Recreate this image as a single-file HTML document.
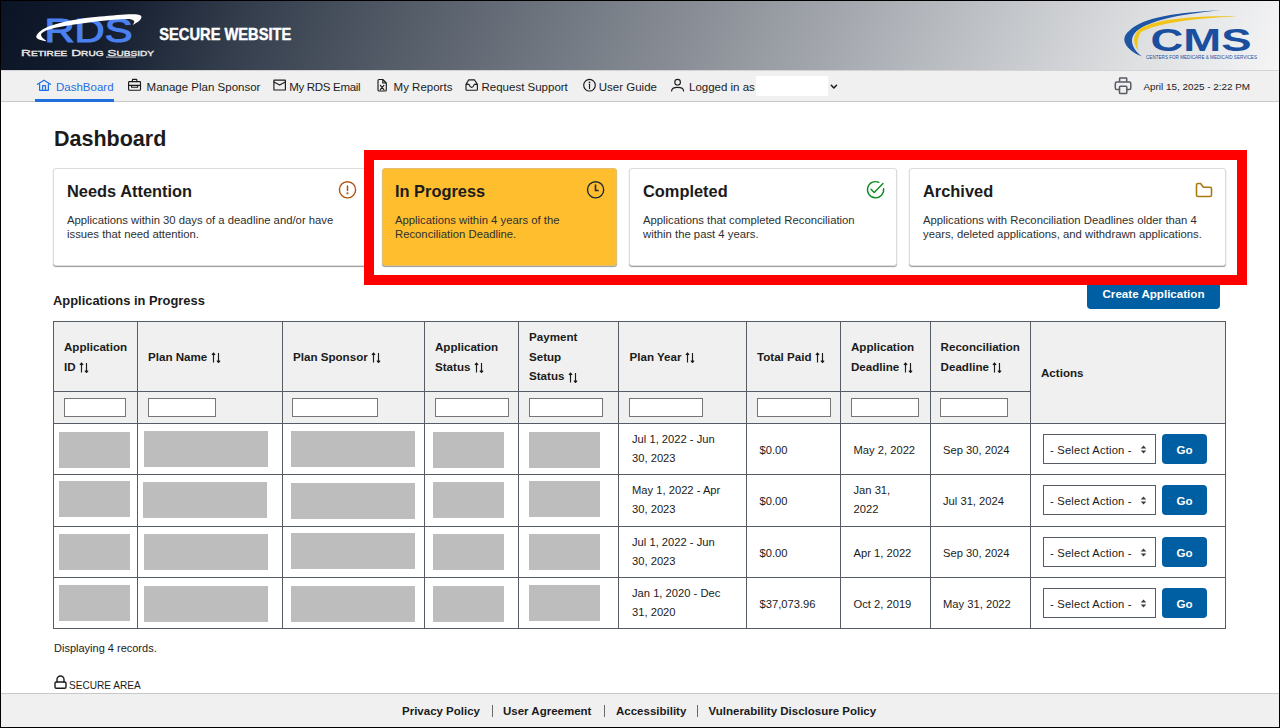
<!DOCTYPE html><html><head><meta charset="utf-8"><style>
*{box-sizing:border-box;margin:0;padding:0}
html,body{width:1280px;height:728px;overflow:hidden;background:#fff}
body{position:relative;font-family:"Liberation Sans",sans-serif;color:#1b1b1b}
.A{position:absolute;white-space:nowrap}
#frame{position:absolute;left:0;top:0;width:1280px;height:728px;border:1px solid #000;z-index:50}
#header{position:absolute;left:0;top:0;width:1280px;height:70px;
 background:linear-gradient(112deg,#0a1425 0%,#141e2f 9%,#343d4c 19%,#555d69 32%,#777d86 46%,#989ca3 60%,#babdc2 74%,#dcdee0 88%,#f5f5f6 100%)}
#nav{position:absolute;left:0;top:70px;width:1280px;height:32px;background:#f0f0f0;border-top:1px solid #d3d3d3;border-bottom:1px solid #c9c9c9}
.nt{font-size:11.5px;line-height:16px;color:#1b1b1b}
.card{position:absolute;top:168px;height:98px;background:#fff;border:1px solid #dcdcdc;border-radius:3px;box-shadow:0 1px 1px #9a9a9a}
.card .t{position:absolute;left:13px;top:12px;font-size:16.4px;font-weight:700;line-height:20px;color:#1b1b1b;white-space:nowrap}
.card .d{position:absolute;left:13px;top:44px;font-size:11.3px;line-height:14px;color:#2e2f30;white-space:nowrap}
.card svg{position:absolute}
#redbox{position:absolute;left:364px;top:150px;width:883px;height:135px;border:10px solid #ff0000;z-index:20}
.hl{position:absolute;background:#565c65}
.th{font-size:11.6px;font-weight:700;line-height:19.5px;color:#1b1b1b}
.td{font-size:11.2px;line-height:19px;color:#1b1b1b}
.gb{position:absolute;background:#bdbdbd}
.inp{position:absolute;top:398px;height:19px;background:#fff;border:1px solid #757575}
.sel{position:absolute;left:1043px;width:113px;height:30px;background:#fff;border:1px solid #565c65}
.go{position:absolute;left:1162px;width:45px;height:30px;background:#005ea2;border-radius:4px;color:#fff;font-size:11.6px;font-weight:700;text-align:center;line-height:31.5px}
.ft{font-size:11.5px;font-weight:700;line-height:16px;color:#1b1b1b}
</style></head><body>
<div id="header"></div>
<svg class="A" style="left:0;top:0" width="170" height="70" viewBox="0 0 170 70">

<text x="44.5" y="42.4" font-family="Liberation Sans" font-size="34" fill="#4a80f0" stroke="#4a80f0" stroke-width="1.1" textLength="88" lengthAdjust="spacingAndGlyphs">RDS</text>
<path d="M46.5,41.3 C41,40.5 35.5,39 36.3,36.3 C37.5,32.5 43,28.5 50,26 C62,22 80,18.3 100,16.6 C118,15 137,12.5 141,15.8 C143,18.5 138,22.5 132.5,25 C136,21.5 134.5,19 127,19 C112,19.3 85,22.5 62,26.5 C51,28.3 43,31 41,34.3 C41,37.5 44,38.8 46.5,41.3 Z" fill="#fff"/>
<text x="21" y="55.7" font-family="Liberation Sans" font-size="9.6" font-weight="400" stroke="#e8e8e8" stroke-width="0.35" fill="#e8e8e8" style="font-variant:small-caps" textLength="133" lengthAdjust="spacingAndGlyphs">Retiree Drug Subsidy</text>
<rect x="106" y="56.6" width="30" height="0.9" fill="#ddd"/>
</svg>
<svg class="A" style="left:150px;top:15px" width="160" height="35" viewBox="150 15 160 35"><text x="159.3" y="40" font-family="Liberation Sans" font-size="16.6" font-weight="700" fill="#fff" stroke="#fff" stroke-width="0.45" textLength="132" lengthAdjust="spacingAndGlyphs">SECURE WEBSITE</text></svg>
<svg class="A" style="left:1110px;top:0" width="170" height="70" viewBox="1110 0 170 70">
<path d="M1142,56.6 C1126,50 1119,39 1129,31 C1140,20 1165,13 1221,10.3 C1175,14.5 1150,21.5 1138,30 C1129,37 1130,47 1142,56.6 Z" fill="#1e55a5"/>
<path d="M1138.6,51 C1134,45 1132,38 1137.5,31 C1146,23 1172,15.5 1237,16.4 C1190,18.2 1155,24 1141,32 C1137.5,37 1136.5,45 1138.6,51 Z" fill="#f0c419"/>
<text x="1150.5" y="50.7" font-family="Liberation Sans" font-size="30.5" font-weight="700" fill="#1a4f9f" textLength="101" lengthAdjust="spacingAndGlyphs">CMS</text>
<text x="1146" y="58.9" font-family="Liberation Sans" font-size="5.6" fill="#1a4f9f" textLength="111" lengthAdjust="spacingAndGlyphs">CENTERS FOR MEDICARE &amp; MEDICAID SERVICES</text>
</svg>
<div id="nav"></div>
<div class="A" style="left:35px;top:99px;width:79px;height:3px;background:#1f6fde"></div>
<div class="A nt" style="left:56px;top:79px;color:#2a6ee0">DashBoard</div>
<div class="A nt" style="left:146.6px;top:79px">Manage Plan Sponsor</div>
<div class="A nt" style="left:289.2px;top:79px;letter-spacing:-0.3px">My RDS Email</div>
<div class="A nt" style="left:393.6px;top:79px">My Reports</div>
<div class="A nt" style="left:481.5px;top:79px">Request Support</div>
<div class="A nt" style="left:598.8px;top:79px">User Guide</div>
<div class="A nt" style="left:689px;top:79px">Logged in as</div>
<div class="A" style="left:756px;top:76px;width:72px;height:20px;background:#fff"></div>
<div class="A nt" style="left:1143.5px;top:79px;font-size:9.9px">April 15, 2025 - 2:22 PM</div>
<div class="A" style="left:54px;top:125.5px;font-size:21.5px;font-weight:700;line-height:26px;color:#1b1b1b">Dashboard</div>
<div class="card" style="left:53px;width:318px;background:#fff;border-color:#dcdcdc"><div class="t">Needs Attention</div><div class="d">Applications within 30 days of a deadline and/or have<br>issues that need attention.</div></div>
<div class="card" style="left:382px;width:235px;background:#ffbe2e;border-color:#e3c070"><div class="t" style="left:12px">In Progress</div><div class="d" style="left:12px">Applications within 4 years of the<br>Reconciliation Deadline.</div></div>
<div class="card" style="left:629px;width:268px;background:#fff;border-color:#dcdcdc"><div class="t">Completed</div><div class="d">Applications that completed Reconciliation<br>within the past 4 years.</div></div>
<div class="card" style="left:909px;width:317px;background:#fff;border-color:#dcdcdc"><div class="t">Archived</div><div class="d">Applications with Reconciliation Deadlines older than 4<br>years, deleted applications, and withdrawn applications.</div></div>
<div id="redbox"></div>
<div class="A" style="left:53px;top:293px;font-size:12.9px;font-weight:700;line-height:16px;color:#1b1b1b">Applications in Progress</div>
<div class="A" style="left:1087px;top:279px;width:133px;height:30px;background:#005ea2;border-radius:4px;color:#fff;font-size:11.6px;font-weight:700;text-align:center;line-height:30px">Create Application</div>
<div class="A" style="left:53px;top:321px;width:1173px;height:102px;background:#f0f0f0"></div>
<div class="hl" style="left:53px;top:321px;width:1px;height:308px"></div>
<div class="hl" style="left:137px;top:321px;width:1px;height:308px"></div>
<div class="hl" style="left:282px;top:321px;width:1px;height:308px"></div>
<div class="hl" style="left:424px;top:321px;width:1px;height:308px"></div>
<div class="hl" style="left:518px;top:321px;width:1px;height:308px"></div>
<div class="hl" style="left:618px;top:321px;width:1px;height:308px"></div>
<div class="hl" style="left:746px;top:321px;width:1px;height:308px"></div>
<div class="hl" style="left:840px;top:321px;width:1px;height:308px"></div>
<div class="hl" style="left:930px;top:321px;width:1px;height:308px"></div>
<div class="hl" style="left:1030px;top:321px;width:1px;height:308px"></div>
<div class="hl" style="left:1225px;top:321px;width:1px;height:308px"></div>
<div class="hl" style="left:53px;top:321px;width:1173px;height:1px"></div>
<div class="hl" style="left:53px;top:391px;width:978px;height:1px"></div>
<div class="hl" style="left:53px;top:423px;width:1173px;height:1px"></div>
<div class="hl" style="left:53px;top:474px;width:1173px;height:1px"></div>
<div class="hl" style="left:53px;top:526px;width:1173px;height:1px"></div>
<div class="hl" style="left:53px;top:577px;width:1173px;height:1px"></div>
<div class="hl" style="left:53px;top:628px;width:1173px;height:1px"></div>
<div class="A th" style="left:64px;top:337.0px">Application<br>ID <svg width="10" height="11" viewBox="0 0 10 11" style="vertical-align:-2.5px" fill="none" stroke="#1b1b1b" stroke-width="1.15"><path d="M2.5,10.6 V1.2 M0.9,2.9 L2.5,1.1 L4.1,2.9 M7.5,1 V10.4 M5.9,8.7 L7.5,10.5 L9.1,8.7"/></svg></div>
<div class="A th" style="left:148px;top:346.75px">Plan Name <svg width="10" height="11" viewBox="0 0 10 11" style="vertical-align:-2.5px" fill="none" stroke="#1b1b1b" stroke-width="1.15"><path d="M2.5,10.6 V1.2 M0.9,2.9 L2.5,1.1 L4.1,2.9 M7.5,1 V10.4 M5.9,8.7 L7.5,10.5 L9.1,8.7"/></svg></div>
<div class="A th" style="left:293px;top:346.75px">Plan Sponsor <svg width="10" height="11" viewBox="0 0 10 11" style="vertical-align:-2.5px" fill="none" stroke="#1b1b1b" stroke-width="1.15"><path d="M2.5,10.6 V1.2 M0.9,2.9 L2.5,1.1 L4.1,2.9 M7.5,1 V10.4 M5.9,8.7 L7.5,10.5 L9.1,8.7"/></svg></div>
<div class="A th" style="left:435px;top:337.0px">Application<br>Status <svg width="10" height="11" viewBox="0 0 10 11" style="vertical-align:-2.5px" fill="none" stroke="#1b1b1b" stroke-width="1.15"><path d="M2.5,10.6 V1.2 M0.9,2.9 L2.5,1.1 L4.1,2.9 M7.5,1 V10.4 M5.9,8.7 L7.5,10.5 L9.1,8.7"/></svg></div>
<div class="A th" style="left:529px;top:327.25px">Payment<br>Setup<br>Status <svg width="10" height="11" viewBox="0 0 10 11" style="vertical-align:-2.5px" fill="none" stroke="#1b1b1b" stroke-width="1.15"><path d="M2.5,10.6 V1.2 M0.9,2.9 L2.5,1.1 L4.1,2.9 M7.5,1 V10.4 M5.9,8.7 L7.5,10.5 L9.1,8.7"/></svg></div>
<div class="A th" style="left:629.5px;top:346.75px">Plan Year <svg width="10" height="11" viewBox="0 0 10 11" style="vertical-align:-2.5px" fill="none" stroke="#1b1b1b" stroke-width="1.15"><path d="M2.5,10.6 V1.2 M0.9,2.9 L2.5,1.1 L4.1,2.9 M7.5,1 V10.4 M5.9,8.7 L7.5,10.5 L9.1,8.7"/></svg></div>
<div class="A th" style="left:757px;top:346.75px">Total Paid <svg width="10" height="11" viewBox="0 0 10 11" style="vertical-align:-2.5px" fill="none" stroke="#1b1b1b" stroke-width="1.15"><path d="M2.5,10.6 V1.2 M0.9,2.9 L2.5,1.1 L4.1,2.9 M7.5,1 V10.4 M5.9,8.7 L7.5,10.5 L9.1,8.7"/></svg></div>
<div class="A th" style="left:851px;top:337.0px">Application<br>Deadline <svg width="10" height="11" viewBox="0 0 10 11" style="vertical-align:-2.5px" fill="none" stroke="#1b1b1b" stroke-width="1.15"><path d="M2.5,10.6 V1.2 M0.9,2.9 L2.5,1.1 L4.1,2.9 M7.5,1 V10.4 M5.9,8.7 L7.5,10.5 L9.1,8.7"/></svg></div>
<div class="A th" style="left:940.6px;top:337.0px">Reconciliation<br>Deadline <svg width="10" height="11" viewBox="0 0 10 11" style="vertical-align:-2.5px" fill="none" stroke="#1b1b1b" stroke-width="1.15"><path d="M2.5,10.6 V1.2 M0.9,2.9 L2.5,1.1 L4.1,2.9 M7.5,1 V10.4 M5.9,8.7 L7.5,10.5 L9.1,8.7"/></svg></div>
<div class="A th" style="left:1041px;top:362.5px">Actions</div>
<div class="inp" style="left:64px;width:62px"></div>
<div class="inp" style="left:148px;width:68px"></div>
<div class="inp" style="left:292px;width:86px"></div>
<div class="inp" style="left:435px;width:74px"></div>
<div class="inp" style="left:529px;width:74px"></div>
<div class="inp" style="left:629px;width:74px"></div>
<div class="inp" style="left:757px;width:74px"></div>
<div class="inp" style="left:851px;width:68px"></div>
<div class="inp" style="left:940px;width:68px"></div>
<div class="gb" style="left:59px;top:432px;width:71px;height:36px"></div>
<div class="gb" style="left:144px;top:431px;width:124px;height:36px"></div>
<div class="gb" style="left:291px;top:431px;width:124px;height:36px"></div>
<div class="gb" style="left:433px;top:432px;width:71px;height:36px"></div>
<div class="gb" style="left:529px;top:432px;width:71px;height:36px"></div>
<div class="A td" style="left:632px;top:430.0px">Jul 1, 2022 - Jun<br>30, 2023</div>
<div class="A td" style="left:759.5px;top:440.5px">$0.00</div>
<div class="A td" style="left:853.5px;top:440.5px">May 2, 2022</div>
<div class="A td" style="left:943px;top:440.5px">Sep 30, 2024</div>
<div class="sel" style="top:434px"><div class="A td" style="left:6px;top:5.5px;letter-spacing:0.2px">- Select Action -</div><svg class="A" style="left:96px;top:9.5px" width="7" height="9" viewBox="0 0 7 9"><path d="M3.5,0.5 L6.3,3.6 H0.7 Z M3.5,8.5 L6.3,5.4 H0.7 Z" fill="#3d3d3d"/></svg></div>
<div class="go" style="top:434px">Go</div>
<div class="gb" style="left:59px;top:481px;width:71px;height:36px"></div>
<div class="gb" style="left:143px;top:482px;width:124px;height:36px"></div>
<div class="gb" style="left:291px;top:483px;width:124px;height:36px"></div>
<div class="gb" style="left:433px;top:482px;width:71px;height:36px"></div>
<div class="gb" style="left:529px;top:481px;width:71px;height:36px"></div>
<div class="A td" style="left:632px;top:481.0px">May 1, 2022 - Apr<br>30, 2023</div>
<div class="A td" style="left:759.5px;top:491.5px">$0.00</div>
<div class="A td" style="left:853.5px;top:481.0px">Jan 31,<br>2022</div>
<div class="A td" style="left:943px;top:491.5px">Jul 31, 2024</div>
<div class="sel" style="top:485px"><div class="A td" style="left:6px;top:5.5px;letter-spacing:0.2px">- Select Action -</div><svg class="A" style="left:96px;top:9.5px" width="7" height="9" viewBox="0 0 7 9"><path d="M3.5,0.5 L6.3,3.6 H0.7 Z M3.5,8.5 L6.3,5.4 H0.7 Z" fill="#3d3d3d"/></svg></div>
<div class="go" style="top:485px">Go</div>
<div class="gb" style="left:59px;top:534px;width:71px;height:36px"></div>
<div class="gb" style="left:144px;top:534px;width:124px;height:36px"></div>
<div class="gb" style="left:291px;top:533px;width:124px;height:36px"></div>
<div class="gb" style="left:433px;top:534px;width:71px;height:36px"></div>
<div class="gb" style="left:529px;top:534px;width:71px;height:36px"></div>
<div class="A td" style="left:632px;top:533.0px">Jul 1, 2022 - Jun<br>30, 2023</div>
<div class="A td" style="left:759.5px;top:543.5px">$0.00</div>
<div class="A td" style="left:853.5px;top:543.5px">Apr 1, 2022</div>
<div class="A td" style="left:943px;top:543.5px">Sep 30, 2024</div>
<div class="sel" style="top:537px"><div class="A td" style="left:6px;top:5.5px;letter-spacing:0.2px">- Select Action -</div><svg class="A" style="left:96px;top:9.5px" width="7" height="9" viewBox="0 0 7 9"><path d="M3.5,0.5 L6.3,3.6 H0.7 Z M3.5,8.5 L6.3,5.4 H0.7 Z" fill="#3d3d3d"/></svg></div>
<div class="go" style="top:537px">Go</div>
<div class="gb" style="left:59px;top:585px;width:71px;height:36px"></div>
<div class="gb" style="left:144px;top:586px;width:124px;height:36px"></div>
<div class="gb" style="left:291px;top:586px;width:124px;height:36px"></div>
<div class="gb" style="left:433px;top:586px;width:71px;height:36px"></div>
<div class="gb" style="left:529px;top:585px;width:71px;height:36px"></div>
<div class="A td" style="left:632px;top:584.0px">Jan 1, 2020 - Dec<br>31, 2020</div>
<div class="A td" style="left:759.5px;top:594.5px">$37,073.96</div>
<div class="A td" style="left:853.5px;top:594.5px">Oct 2, 2019</div>
<div class="A td" style="left:943px;top:594.5px">May 31, 2022</div>
<div class="sel" style="top:588px"><div class="A td" style="left:6px;top:5.5px;letter-spacing:0.2px">- Select Action -</div><svg class="A" style="left:96px;top:9.5px" width="7" height="9" viewBox="0 0 7 9"><path d="M3.5,0.5 L6.3,3.6 H0.7 Z M3.5,8.5 L6.3,5.4 H0.7 Z" fill="#3d3d3d"/></svg></div>
<div class="go" style="top:588px">Go</div>
<div class="A" style="left:54px;top:640px;font-size:11px;line-height:16px;color:#1b1b1b">Displaying 4 records.</div>
<div class="A" style="left:69px;top:677.5px;font-size:10.1px;line-height:16px;color:#1b1b1b">SECURE AREA</div>
<div class="A" style="left:0;top:693px;width:1280px;height:35px;background:#f0f0f0;border-top:1px solid #c8c8c8"></div>
<div class="A ft" style="left:402px;top:703px">Privacy Policy</div>
<div class="A ft" style="left:503px;top:703px">User Agreement</div>
<div class="A ft" style="left:616px;top:703px">Accessibility</div>
<div class="A ft" style="left:708.5px;top:703px">Vulnerability Disclosure Policy</div>
<div class="A" style="left:491.5px;top:705px;width:1px;height:12px;background:#6a6a6a"></div>
<div class="A" style="left:604px;top:705px;width:1px;height:12px;background:#6a6a6a"></div>
<div class="A" style="left:697px;top:705px;width:1px;height:12px;background:#6a6a6a"></div>
<svg class="A" style="left:0;top:0;z-index:10" width="1280" height="728" viewBox="0 0 1280 728" fill="none" stroke-linecap="round" stroke-linejoin="round">
<g stroke="#1f6fe5" stroke-width="1.25"><path d="M37.5,84.3 L44,80.2 L50.5,84.3 M39.6,83 V90.3 H48.4 V83 M42.6,90.3 V85.6 H45.5 V90.3"/></g>
<g stroke="#1b1b1b" stroke-width="1.15">
<rect x="128.6" y="81.6" width="11.9" height="8.7" rx="0.8"/><path d="M132.4,81.6 V79.8 Q132.4,79.3 133,79.3 H136.3 Q136.8,79.3 136.8,79.8 V81.6 M128.6,85.3 H140.5 M131.6,85.3 V87.2 H137.6 V85.3"/>
<rect x="273.9" y="80.1" width="11.5" height="9.9" rx="0.3"/><path d="M274,82 L279.6,85.1 L285.3,82"/>
<path d="M378,80.5 Q378,79.5 379,79.5 H382.8 L386.3,83 V90 Q386.3,91 385.3,91 H379 Q378,91 378,90 Z M382.8,79.5 V83 H386.3 M380.3,85.4 L383.9,89.6 M383.9,85.4 L380.3,89.6"/>
<path d="M466,84.4 L468.8,79.8 H474.4 L477.4,84.4 V89.6 Q477.4,90.2 476.8,90.2 H466.6 Q466,90.2 466,89.6 Z M466,84.4 H469 Q470,87.3 471.7,87.3 Q473.3,87.3 474.3,84.4 H477.4"/>
<circle cx="589.5" cy="85.2" r="5.8"/><path d="M589.5,84.2 V88.6"/><circle cx="589.5" cy="82.4" r="0.35" fill="#1b1b1b"/>
<circle cx="677.6" cy="82.2" r="2.8"/><path d="M671.6,91 Q671.6,87.3 677.6,87.3 Q683.6,87.3 683.6,91"/>
<path d="M831.3,85.3 L833.9,88 L836.5,85.3" stroke-width="1.5"/>
</g>
<g stroke="#565c65" stroke-width="1.5">
<path d="M1119.6,81.3 V78.5 Q1119.6,78 1120.1,78 H1126.2 Q1126.7,78 1126.7,78.5 V81.3"/>
<path d="M1119.5,89.5 H1116.8 Q1115.3,89.5 1115.3,88 V83.5 Q1115.3,82 1116.8,82 H1129.3 Q1130.8,82 1130.8,83.5 V88 Q1130.8,89.5 1129.3,89.5 H1126.8"/>
<rect x="1119.5" y="86.3" width="7.3" height="7.3" rx="0.8"/>
</g>
<g stroke="#b0530f" stroke-width="1.4"><circle cx="347.5" cy="189.8" r="8.1"/><path d="M347.5,185.9 V190.6" stroke-width="1.5"/><circle cx="347.5" cy="193.3" r="0.45" stroke-width="1.3"/></g>
<g stroke="#1b2b33" stroke-width="1.4"><circle cx="595.6" cy="189.8" r="8.1"/><path d="M595.5,184.4 V190.5 H598.7" stroke-width="1.6" stroke-linecap="butt" stroke-linejoin="miter"/></g>
<g stroke="#0d8a1f" stroke-width="1.4"><path d="M883.6,188.7 A8.1,8.1 0 1 1 878.8,182.3"/><path d="M871,189.3 L874.2,192.5 L883,183.5"/></g>
<g stroke="#a87a0f" stroke-width="1.6"><path d="M1196.5,185 Q1196.5,183.5 1198,183.5 H1200.5 L1203.5,187.3 H1210 Q1211.5,187.3 1211.5,188.8 V195 Q1211.5,196.5 1210,196.5 H1198 Q1196.5,196.5 1196.5,195 Z"/></g>
<g stroke="#1b1b1b" stroke-width="1.4"><path d="M57,682 V679.5 A3.5,3.5 0 0 1 64,679.5 V682"/><rect x="55" y="682" width="11" height="6.3" rx="1.2"/></g>
</svg>
<div id="frame"></div>
</body></html>
